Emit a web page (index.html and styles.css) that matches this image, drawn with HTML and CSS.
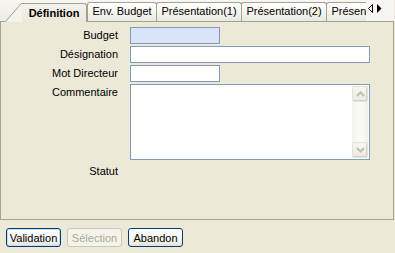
FILE: index.html
```html
<!DOCTYPE html>
<html lang="fr">
<head>
  <meta charset="UTF-8" />
  <title>Définition</title>
  <link rel="stylesheet" href="styles.css">
</head>
<body>
  <div class="tabbar">
    <div class="lead"></div>
    <div class="tab active">
      <svg class="slant" width="17" height="19" viewBox="0 0 17 19">
        <path d="M0 19 L15 2 Q16 1 17 1 L17 19 Z" fill="#f3f2ec"/>
        <path d="M0.5 18.5 L15 2 Q16 0.5 17 0.5" stroke="#a5a291" fill="none"/>
      </svg>
      <span class="tab-label">Définition</span>
    </div>
    <div class="tabs">
      <div class="tab w-env">Env. Budget</div>
      <div class="tab w-pres">Présentation(1)</div>
      <div class="tab w-pres">Présentation(2)</div>
      <div class="tab w-pres">Présentation(3)</div>
    </div>
    <div class="scroller">
      <svg width="5" height="9" viewBox="0 0 5 9"><path d="M4.5 0.5 L4.5 8.5 L0.5 4.5 Z" fill="none" stroke="#000"/></svg>
      <svg width="5" height="9" viewBox="0 0 5 9"><path d="M0 0 L0 9 L4.5 4.5 Z" fill="#000"/></svg>
    </div>
  </div>

  <div class="page">
    <div class="form">
      <label>Budget</label>
      <div class="field short budget"></div>

      <label>Désignation</label>
      <div class="field long"></div>

      <label>Mot Directeur</label>
      <div class="field short"></div>

      <label>Commentaire</label>
      <div class="memo">
        <div class="memo-text"></div>
        <div class="vscroll">
          <div class="sbtn">
            <svg width="9" height="6" viewBox="0 0 9 6"><path d="M1 5 L4.5 1.5 L8 5" fill="none" stroke="#c2c0b4" stroke-width="2"/></svg>
          </div>
          <div class="track"></div>
          <div class="sbtn">
            <svg width="9" height="6" viewBox="0 0 9 6"><path d="M1 1 L4.5 4.5 L8 1" fill="none" stroke="#c2c0b4" stroke-width="2"/></svg>
          </div>
        </div>
      </div>

      <label class="status">Statut</label>
      <div></div>
    </div>
  </div>

  <div class="buttons">
    <button class="btn default">Validation</button>
    <button class="btn" disabled>Sélection</button>
    <button class="btn">Abandon</button>
  </div>
</body>
</html>
```

FILE: styles.css
```css
* {
  box-sizing: border-box;
}
html, body {
  margin: 0;
  padding: 0;
  background: #ece9d8;
  font-family: "Liberation Sans", Arial, sans-serif;
  font-size: 11px;
  color: #000;
}

/* Tab strip */
.tabbar {
  display: flex;
  align-items: flex-end;
  width: 394px;
  height: 22px;
  background: linear-gradient(#f7f6f2, #ecebe4);
}
.lead {
  width: 5px;
  height: 1px;
  background: #a5a291;
}
.tab {
  flex: none;
  height: 19px;
  line-height: 17px;
  padding: 0;
  text-align: center;
  white-space: nowrap;
  border: 1px solid #a5a291;
  border-radius: 3px 3px 0 0;
  margin-left: -1px;
  background: linear-gradient(#ffffff, #f3f2ec 60%, #e9e8e1);
}
.tab.w-env {
  width: 70px;
}
.tab.w-pres {
  width: 86px;
}
.tab.active {
  display: flex;
  align-items: flex-end;
  margin-left: 0;
  border: none;
  background: none;
}
.slant {
  display: block;
}
.tab-label {
  display: block;
  width: 65px;
  height: 19px;
  padding-top: 1px;
  text-align: center;
  font-weight: bold;
  border-top: 1px solid #a5a291;
  border-right: 1px solid #a5a291;
  border-radius: 0 3px 0 0;
  background: linear-gradient(#f3f2ec, #ece9d8);
}
.tabs {
  display: flex;
  align-items: flex-end;
  width: 279px;
  height: 22px;
  overflow: hidden;
  border-bottom: 1px solid #a5a291;
}
.tabs .tab {
  border-bottom: none;
}
.tabs .tab:first-child {
  margin-left: 0;
}
.scroller {
  display: flex;
  align-items: flex-start;
  gap: 4px;
  flex: 1;
  height: 22px;
  padding: 4px 0 0 2px;
  background: #f6f5f1;
  border-bottom: 1px solid #a5a291;
}

/* Tab page */
.page {
  width: 394px;
  height: 198px;
  border: 1px solid #a5a291;
  border-top: none;
  padding-top: 5px;
}
.form {
  display: grid;
  grid-template-columns: 117px 240px;
  grid-template-rows: 17px 17px 17px 76px 17px;
  column-gap: 12px;
  row-gap: 2px;
}
.form label {
  text-align: right;
  line-height: 17px;
}
.form label.status {
  padding-top: 1px;
}
.field {
  height: 17px;
  border: 1px solid #7f9db9;
  background: #fff;
}
.field.short {
  width: 90px;
}
.field.long {
  width: 240px;
}
.field.budget {
  background: #d9e4fa;
}
.memo {
  display: flex;
  width: 240px;
  height: 76px;
  border: 1px solid #7f9db9;
  background: #fff;
  padding: 1px;
}
.memo-text {
  flex: 1;
}
.vscroll {
  display: flex;
  flex-direction: column;
  width: 16px;
  background: linear-gradient(to right, #f4f3ee, #fbfbf9 60%, #f0efe8);
}
.sbtn {
  display: flex;
  align-items: center;
  justify-content: center;
  height: 16px;
  border: 1px solid #e6e4da;
  border-radius: 2px;
  background: linear-gradient(#f7f6f2, #ebe9e0);
  box-shadow: inset -1px -1px 0 #d6d3c6;
}
.track {
  flex: 1;
}

/* Buttons */
.buttons {
  display: flex;
  gap: 6px;
  padding: 8px 0 0 6px;
}
.btn {
  width: 55px;
  height: 19px;
  padding: 0;
  font-family: inherit;
  font-size: 11px;
  color: #000;
  border: 1px solid #003c74;
  border-radius: 3px;
  background: linear-gradient(#ffffff, #f4f3ee 70%, #e3e0d4);
}
.btn.default {
  box-shadow: inset 0 0 0 1px #c9dbf5;
}
.btn:disabled {
  color: #aca899;
  border-color: #c9c7ba;
  background: #f5f4ea;
}
```
